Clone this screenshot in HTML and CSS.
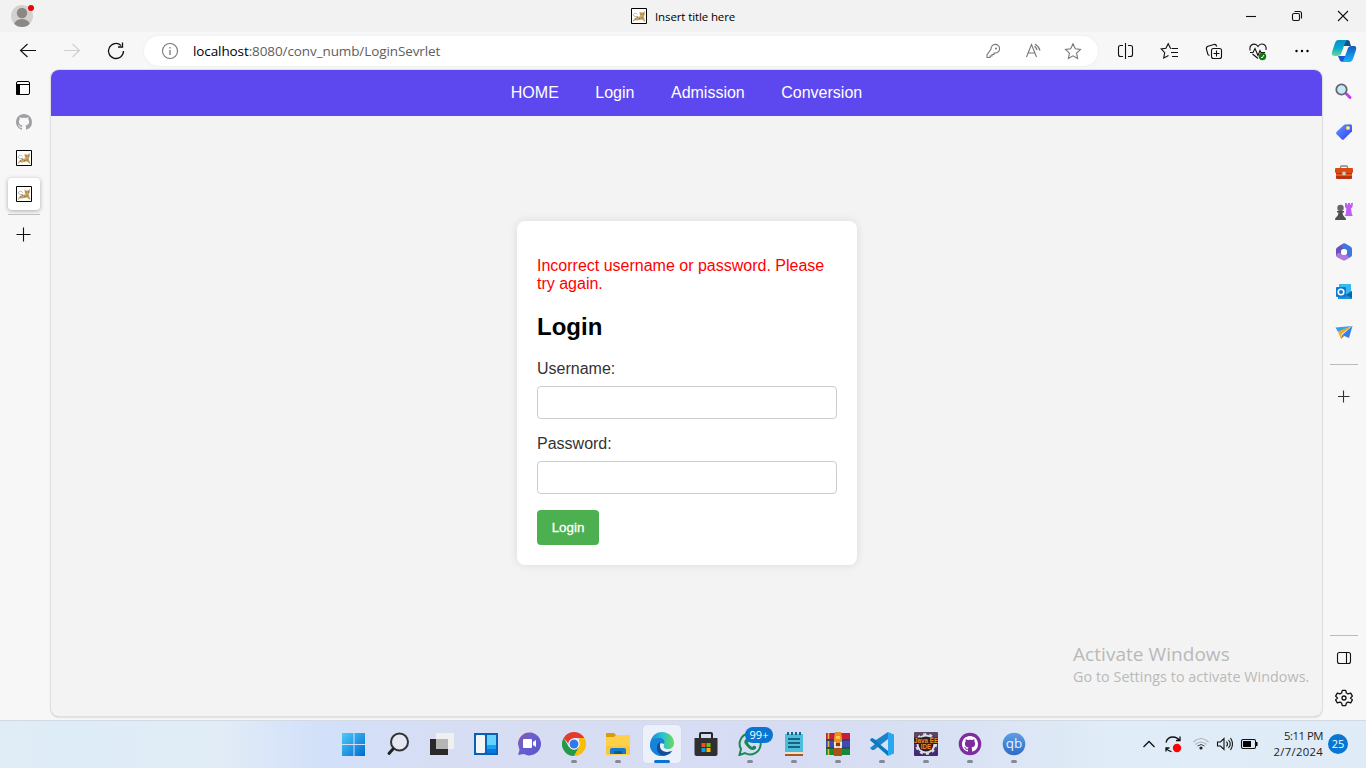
FILE: index.html
```
<!DOCTYPE html>
<html lang="en">
<head>
<meta charset="utf-8">
<title>Insert title here</title>
<link rel="stylesheet" href="styles.css">
</head>
<body>
<svg class="defs" width="0" height="0" aria-hidden="true">
  <symbol id="cat" viewBox="0 0 16 16">
    <path fill="#fff" stroke="#000" d="M.5.5h15v15H.5z"/>
    <path fill="none" stroke="#999" stroke-width=".7" d="M6 8.500C3 9 2 7.500 2.500 6.200 3.200 5 5.500 5 6.500 6.500"/>
    <path fill="#c8a260" d="M8.500 3.500l1.500 1h2l2-1.500-.3 3.500-.9 2 .7 2.500 1 2.500h-1.300l-2.200-2-2.500.2-2 .8-2.500-.3-1.500 1.300H1.500l2-3 2.500-1.500 3.500-.7-.8-2z"/>
    <path fill="#7a6034" d="M9.700 5.500h.9v.9h-.9zM12 5.500h.9v.9H12zM6 8.500h1v1H6zM8 10.300h1.300v.9H8zM10.500 9.500h1.200v1h-1.200zM4 10.500h1v.8H4z"/>
  </symbol>
  <symbol id="octocat" viewBox="0 0 16 16">
    <path d="M8 0C3.580 0 0 3.580 0 8c0 3.540 2.290 6.530 5.470 7.590.4.070.55-.17.55-.38 0-.19-.01-.82-.01-1.490-2.010.37-2.530-.49-2.690-.94-.09-.23-.48-.94-.82-1.130-.28-.15-.68-.52-.01-.53.63-.01 1.080.58 1.230.82.72 1.210 1.870.87 2.330.66.070-.52.28-.87.510-1.070-1.780-.2-3.640-.89-3.640-3.950 0-.87.310-1.590.82-2.150-.08-.2-.36-1.020.08-2.120 0 0 .67-.21 2.200.82.64-.18 1.320-.27 2-.27s1.360.09 2 .27c1.530-1.040 2.200-.82 2.200-.82.44 1.100.16 1.920.08 2.120.51.56.82 1.270.82 2.150 0 3.070-1.870 3.750-3.650 3.950.29.25.54.73.54 1.480 0 1.070-.01 1.930-.01 2.200 0 .21.15.46.55.38A8.010 8.010 0 0 0 16 8c0-4.420-3.580-8-8-8z"/>
  </symbol>
</svg>

<div class="desktop">
  <header class="titlebar">
    <div class="profile">
      <svg width="24" height="24" viewBox="0 0 24 24"><defs><clipPath id="pc"><circle cx="11" cy="13" r="11"/></clipPath></defs><g clip-path="url(#pc)"><path fill="#d3d1ce" d="M0 0h24v24H0z"/><circle cx="11" cy="10" r="5.200" fill="#8b8784"/><ellipse cx="11" cy="22" rx="8" ry="6" fill="#8b8784"/></g></svg>
      <i class="alert"></i>
    </div>
    <div class="window-title"><svg width="16" height="16"><use href="#cat"/></svg><span>Insert title here</span></div>
    <div class="window-buttons">
      <svg width="46" height="32"><path class="ln" d="M18 16.500h10"/></svg>
      <svg width="46" height="32"><rect class="ln" x="18.500" y="13.500" width="7" height="7" rx="1.500"/><path class="ln" d="M20.500 11.500h5a2 2 0 0 1 2 2v5"/></svg>
      <svg width="46" height="32"><path class="ln" d="M18 11l10 10M28 11L18 21"/></svg>
    </div>
  </header>

  <div class="toolbar">
    <svg width="44" height="38" viewBox="0 0 44 38"><path class="ln" d="M30 18.500H14.500M21.500 12l-7 6.500 7 6.500"/></svg>
    <svg width="44" height="38" viewBox="0 0 44 38"><path class="ln faint" d="M14 18.500h15.500M22.500 12l7 6.500-7 6.500"/></svg>
    <svg width="44" height="38" viewBox="0 0 44 38"><path class="ln big" d="M29.500 19a7.500 7.500 0 1 1-2.500-5.600M28.500 10.500v4.500h-4.500"/></svg>
    <div class="address">
      <svg class="info" width="18" height="18" viewBox="0 0 18 18"><circle class="ln gray" cx="9" cy="9" r="7.500"/><path class="gray" d="M9 8v5M9 5v1.500" stroke-width="1.300"/></svg>
      <span class="url">localhost<span>:8080/conv_numb/LoginSevrlet</span></span>
      <div class="address-tools">
        <svg width="40" height="30" viewBox="0 0 40 30"><path class="ln gray" d="M18 14a4.300 4.300 0 1 1 4 4h-1v1.500h-2V21h-2v1.500h-3V20z" transform="translate(0 -1)"/><circle cx="23" cy="12.500" r="1" fill="#777"/></svg>
        <svg width="40" height="30" viewBox="0 0 40 30"><path class="ln gray" d="M13.500 21l5-12.500 5 12.500M15 17h7M21.500 10q2 2 2.500 4M22 8q4 2.500 5 6.500"/></svg>
        <svg width="40" height="30" viewBox="0 0 40 30"><path class="ln gray" d="M20 7.800l2.300 4.900 5.200.7-3.900 3.700 1 5.300-4.600-2.600-4.600 2.600 1-5.300-3.900-3.700 5.200-.7z"/></svg>
      </div>
    </div>
    <div class="toolbar-actions">
      <svg width="44" height="38" viewBox="0 0 44 38"><path class="ln" d="M19 13.500h-2.500a2 2 0 0 0-2 2v7a2 2 0 0 0 2 2H19M24 13.500h2.500a2 2 0 0 1 2 2v7a2 2 0 0 1-2 2H24M21.500 11v16"/></svg>
      <svg width="44" height="38" viewBox="0 0 44 38"><path class="ln" d="M23.500 16.500l-1-.3-2.300-4.500-2.300 4.600-4.700.7 3.500 3.600-1 5.400 4.800-2.500M24 16.500h6M23 20.500h7M24 24.500h6"/></svg>
      <svg width="44" height="38" viewBox="0 0 44 38"><rect class="ln" x="19.500" y="16.500" width="10" height="10" rx="2"/><path class="ln" d="M24.500 18.500v6M21.500 21.500h6M17.500 23.500l-1.500-.8-1.500-5.200q-.7-2.500 1.500-3.300l6-1.700q2-.5 2.800 2"/></svg>
      <svg width="44" height="38" viewBox="0 0 44 38"><path class="ln" d="M14 18.500c-1-7 5.500-8 8-4 2.500-4 9-3 8 3.500M16.500 22l5.500 4.500M14 20.500h3l2-4 3 7 2-5 1 2h4"/><circle cx="26.500" cy="24.500" r="3.700" fill="#107c10"/><path stroke="#fff" d="M25 25l1 1 2-3" fill="none"/></svg>
      <svg width="44" height="38" viewBox="0 0 44 38"><circle cx="16.500" cy="19" r="1.200"/><circle cx="22" cy="19" r="1.200"/><circle cx="27.500" cy="19" r="1.200"/></svg>
    </div>
    <svg width="40" height="38" viewBox="0 0 40 38">
      <defs><linearGradient id="cp1" x1="0" y1="0" x2="0" y2="1"><stop stop-color="#0691c5"/><stop offset=".5" stop-color="#08a9d0"/><stop offset="1" stop-color="#69db8b"/></linearGradient><linearGradient id="cp2" x1="0" y1="0" x2="0" y2="1"><stop stop-color="#1558c2"/><stop offset="1" stop-color="#14b5fa"/></linearGradient></defs>
      <path fill="#0a5384" d="M19 8h4q3 0 3 3l1 3h-7z"/><path fill="#1a55d3" d="M14 24h9l-2 6h-2q-3 0-3.700-3z"/>
      <path fill="url(#cp1)" d="M14 8h10q-2 0-3 3l-4 11q-1 2-3 2h-3q-4 0-3-4l3-9q1-3 3-3z"/>
      <path fill="url(#cp2)" d="M26 30H17q2 0 3-3l4-11q1-2 3-2h3q3 0 2 4l-3 9q-1 3-3 3z"/>
    </svg>
  </div>

  <div class="workspace">
    <aside class="tabs">
      <svg width="16" height="16" class="tab-menu" viewBox="0 0 16 16"><rect x="1.500" y="1.500" width="13" height="13" rx="1.500" fill="#fff" stroke="#000" stroke-width="1"/><path d="M1 4h4v11H2q-1 0-1-1z"/><path stroke="#000" d="M2 4.500h12"/></svg>
      <svg width="16" height="16" class="tab-git" fill="#a0a0a4"><use href="#octocat"/></svg>
      <svg width="16" height="16" class="tab-cat"><use href="#cat"/></svg>
      <div class="tab-active"><svg width="16" height="16"><use href="#cat"/></svg></div>
      <hr class="tab-rule">
      <svg width="16" height="16" class="tab-new"><path class="ln" d="M.5 8.500h14M7.500 1.500v14"/></svg>
    </aside>

    <main class="page">
      <nav class="nav"><a>HOME</a><a>Login</a><a>Admission</a><a>Conversion</a></nav>
      <section class="content">
        <form class="card">
          <p class="error">Incorrect username or password. Please try again.</p>
          <h2>Login</h2>
          <label for="u">Username:</label>
          <input id="u" type="text">
          <label for="p">Password:</label>
          <input id="p" type="password">
          <button type="button">Login</button>
        </form>
      </section>
      <div class="watermark"><div class="wm-title">Activate Windows</div><div class="wm-sub">Go to Settings to activate Windows.</div></div>
    </main>

    <aside class="sidebar">
      <svg width="40" height="40" viewBox="0 0 40 40"><path stroke="#c23df0" stroke-width="3" stroke-linecap="round" d="M22.500 22l3.500 3.500"/><circle cx="17.500" cy="17.500" r="5.200" fill="#c5e8fb" stroke="#666" stroke-width="1.800"/></svg>
      <svg width="40" height="40" viewBox="0 0 40 40"><defs><linearGradient id="tg" x1="0" y1="0" x2="1" y2="1"><stop stop-color="#5ba0ff"/><stop offset="1" stop-color="#363af0"/></linearGradient></defs><path fill="url(#tg)" d="M20.500 12.500l6-.3q1.500 0 1.500 1.500v5.500l-8 8q-1.200 1-2.400 0l-5-5q-1-1.200 0-2.400z"/><circle cx="24" cy="16" r="1.500" fill="#fff" stroke="#ffc83d" stroke-width="1.200"/></svg>
      <svg width="40" height="40" viewBox="0 0 40 40"><path fill="none" stroke="#888" stroke-width="1.300" d="M16.500 17v-2q0-1 1-1h5q1 0 1 1v2"/><rect x="11" y="16" width="18" height="5" rx="1" fill="#d84a16"/><path fill="#b8330f" d="M12 21h16v5q0 1-1 1H13q-1 0-1-1z"/><path fill="#e45a20" d="M12 22h16v2H12z"/><circle cx="20" cy="21.500" r="1.900" fill="#c9c9c9"/></svg>
      <svg width="40" height="40" viewBox="0 0 40 40"><path fill="#c25af5" d="M21 11h1.800v1.500H24V11h2v1.500h1.200V11H29l-.6 4-1.400 1.500.8 5.500 1 2h-8l1-2 .6-5.500L21 15z"/><circle cx="16.500" cy="16" r="3.200" fill="#666"/><path fill="#505050" d="M13 19h7v1.500h-1.500q0 3 2 4.500 1.500.5 1.500 3H11q0-2.500 1.500-3 2-1.500 2-4.500H13z"/></svg>
      <svg width="40" height="40" viewBox="0 0 40 40"><g fill="none" stroke-width="5" stroke-linecap="round" stroke-linejoin="round"><path stroke="#6a52bd" d="M14.500 22.500v-5l4.500-3"/><path stroke="#b07adb" d="M15 23.500l5 2.500 5-2.800"/><path stroke="#3d78dd" d="M20.500 14l5 3v5.500"/></g><circle cx="20" cy="20" r="3" fill="#fff"/></svg>
      <svg width="40" height="40" viewBox="0 0 40 40"><path fill="#35b9f1" d="M15 12h12v14H15z"/><path fill="#0f6cbd" d="M15 16h6v6h-6z"/><path fill="#1493df" d="M14 19l7 4 7-4v8H14z"/><path fill="#0a63ad" d="M22 23l6-4v7z"/><rect x="12" y="15" width="10" height="10" rx="1" fill="#0f78d4"/><circle cx="17" cy="20" r="2.800" fill="none" stroke="#fff" stroke-width="1.600"/></svg>
      <svg width="40" height="40" viewBox="0 0 40 40"><path fill="#31a4ec" d="M11.500 15.500L28.500 14 14 20z"/><path fill="#f5a623" d="M14 19.500L28.500 14l-11 8-.5 5z"/><path fill="#327fe9" d="M28.500 14L25 26l-7-3z"/><path fill="#876a3c" d="M17 27l1-4 2 1z"/></svg>
      <hr>
      <svg class="add" width="40" height="40" viewBox="0 0 40 40"><path class="ln dim" d="M14 20.500h11.500M19.500 14.500v12"/></svg>
      <hr class="lower">
      <svg width="40" height="40" viewBox="0 0 40 40"><rect class="ln" x="13.500" y="14.500" width="13" height="11" rx="2"/><path class="ln" d="M22.500 14.500v11"/></svg>
      <svg width="40" height="40" viewBox="0 0 40 40"><path class="ln big" stroke-linejoin="round" d="M18.300 12.300h3.400l.7 2.700 1.600.9 2.700-.8 1.700 3-1.900 1.900 1.900 1.900-1.700 3-2.700-.8-1.600.9-.7 2.700h-3.400l-.7-2.700-1.600-.9-2.700.8-1.700-3 1.900-1.900-1.900-1.900 1.700-3 2.700.8 1.600-.9z"/><circle class="ln big" cx="20" cy="20" r="2"/></svg>
    </aside>
  </div>

  <footer class="taskbar">
    <div class="apps">
      <div class="app"><svg width="24" height="24" viewBox="0 0 24 24"><defs><linearGradient id="win" x1="0" y1="0" x2="1" y2="1"><stop stop-color="#4ccafa"/><stop offset="1" stop-color="#006cce"/></linearGradient></defs><path fill="url(#win)" d="M0 1h11.500v11H0zM12.500 1H23v11H12.500zM0 13h11.500v11H0zM12.500 13H23v11H12.500z"/></svg></div>
      <div class="app"><svg width="24" height="24" viewBox="0 0 24 24"><circle cx="13.500" cy="10" r="8.500" fill="#e5e8f3" stroke="#333" stroke-width="2"/><path stroke="#222" stroke-width="3" stroke-linecap="round" d="M7 17l-4 4.500"/></svg></div>
      <div class="app"><svg width="24" height="24" viewBox="0 0 24 24"><path fill="#292929" d="M0 7h18v16H0z"/><path fill="#f0f0f0" d="M6 1h18v16H6z"/><path fill="#b5b5b5" d="M6 7h12v10H6z"/></svg></div>
      <div class="app"><svg width="24" height="24" viewBox="0 0 24 24"><path fill="#0861b6" d="M0 1h24v22H0z"/><rect x="2" y="3" width="9" height="18" rx="1" fill="#f5f5f5"/><path fill="#64d3fd" d="M13 3h9v10h-9z"/><path fill="#16a3f5" d="M13 13h9v8h-9z"/><path fill="#0879da" d="M13 17h9v4h-9z"/></svg></div>
      <div class="app"><svg width="24" height="24" viewBox="0 0 24 24"><defs><linearGradient id="chat" x1="0" y1="0" x2="1" y2="1"><stop stop-color="#8b5a9a"/><stop offset=".4" stop-color="#6b5fd0"/><stop offset="1" stop-color="#5655c9"/></linearGradient></defs><path fill="url(#chat)" d="M0 12a11.500 11.500 0 1 1 6 10l-6 1 1.500-5z"/><rect x="5" y="7" width="9" height="9" rx="1" fill="#fff"/><path fill="#fff" d="M15 10l3-2v7l-3-2z"/></svg></div>
      <div class="app running"><svg width="24" height="24" viewBox="0 0 24 24"><path fill="#e33b2e" d="M1.600 6a12 12 0 0 1 20.800 0H12v12z"/><path fill="#fbbc05" d="M22.400 6A12 12 0 0 1 12 24l5-9 0-9z"/><path fill="#269846" d="M1.600 6A12 12 0 0 0 12 24l5-9-10 0z"/><circle cx="12" cy="12" r="5.700" fill="#fff"/><circle cx="12" cy="12" r="4.500" fill="#3279ed"/></svg></div>
      <div class="app running"><svg width="24" height="24" viewBox="0 0 24 24"><path fill="#d99a0b" d="M0 2q0-1 1-1h7l2 2v4H0z"/><path fill="#ffd14b" d="M0 5h8l2-2h14v20H0z"/><path fill="#f8c843" d="M0 14h24v8H0z"/><path fill="#157acb" d="M4 22v-4q0-2 2-2h12q2 0 2 2v4z"/><path fill="#0a5ca2" d="M8 19h8v3H8z"/></svg></div>
      <div class="app running current"><svg width="24" height="24" viewBox="0 0 24 24"><defs><linearGradient id="eg"><stop stop-color="#1687d8"/><stop offset=".5" stop-color="#29bfd5"/><stop offset="1" stop-color="#68dc55"/></linearGradient></defs><path fill="url(#eg)" d="M0 12C1 4 6 0 12 0c7 0 12 5 12 11 0 4-3 6-6 6-4 0-5-2-4-4 1-3-2-5-5-5-5 0-8 2-9 4z"/><path fill="#1682d8" d="M0 12C1 8 5 6 9 6c5 0 6 3 5 6-4-2-6 1-5 5q1 4 7 7C8 26-1 20 0 12z"/><path fill="#124d98" d="M10 10c-5 3-4 14 5 13.500 4-.3 6-3 7.500-5-6 3-12 1-12.500-4z"/></svg></div>
      <div class="app"><svg width="24" height="24" viewBox="0 0 24 24"><path fill="none" stroke="#262626" stroke-width="2" d="M6 8V2q0-1 1-1h10q1 0 1 1v6"/><path fill="#303030" d="M.5 6h23v16q0 2-2 2h-19q-2 0-2-2z"/><path fill="#f25022" d="M7.500 11h4v4h-4z"/><path fill="#7fba00" d="M12.500 11h4v4h-4z"/><path fill="#00a4ef" d="M7.500 16h4v4h-4z"/><path fill="#ffb900" d="M12.500 16h4v4h-4z"/></svg></div>
      <div class="app running"><svg width="24" height="24" viewBox="0 0 24 24"><path fill="none" stroke="#188953" stroke-width="2" d="M1.500 23l1.500-6a10.500 10.500 0 1 1 4 4z"/><path fill="#188953" d="M8 7q2-1 3 2l-1 2q1 2 4 4l2-1.500q3 1 2 3-4 4-9-2-5-5-1-7.500z"/></svg><span class="count">99+</span></div>
      <div class="app running"><svg width="24" height="24" viewBox="0 0 24 24"><path fill="#4cbedb" d="M3 2h18v19H3z"/><path stroke="#176480" stroke-width="2" d="M6 0v3M10 0v3M14 0v3M18 0v3M6 7h12M6 11h12M6 15h12"/><path fill="#f3dfc6" d="M3 20h18v2H3z"/><path fill="#a9571d" d="M3 22h18v2H3z"/></svg></div>
      <div class="app running"><svg width="24" height="24" viewBox="0 0 24 24"><path fill="#c71e3d" d="M0 1h24v7H0z"/><path fill="#4149b3" d="M0 8h24v8H0z"/><path fill="#16893d" d="M0 16h24v7H0z"/><path stroke="#333" d="M0 8h24M0 16h24"/><path stroke="#e4bd35" stroke-width="1.500" d="M2.500 1v6M2.500 9v6M2.500 17v6"/><path fill="#e89421" d="M9 0h6l1 6v7H8V6z"/><path fill="#ffc44d" d="M10 4h4v3h-4z"/><path fill="#a65516" d="M8 16h8v8H8z"/><path fill="#7d3d12" d="M9 11h6v4H9z"/><path fill="none" stroke="#fff" stroke-width="1.600" d="M9 10v6M15 10v6M9 15h6"/></svg></div>
      <div class="app running"><svg width="24" height="24" viewBox="0 0 24 24"><path fill="#1b83cb" d="M0 8l2-2 4 2L18 0v7L4 18H2l-2-2 5-4z"/><path fill="#0879bd" d="M2 6L18 19v5L0 8z"/><path fill="#28a7f2" d="M18 0l6 2.500v19L18 24z"/></svg></div>
      <div class="app running"><svg class="javaee" width="24" height="24" viewBox="0 0 24 24"><defs><linearGradient id="ee" x1="0" y1="0" x2="0" y2="1"><stop stop-color="#5d4a62"/><stop offset="1" stop-color="#43247a"/></linearGradient></defs><rect width="24" height="24" rx="1" fill="url(#ee)"/><circle cx="12" cy="12" r="8.500" fill="#2b2230" stroke="#ddd" stroke-width="2"/><circle cx="12" cy="12" r="10" fill="none" stroke="#ddd" stroke-width="2" stroke-dasharray="3 3.280"/><path fill="#2b2022" d="M0 5.500h24V12H0zM6 12h12v5.500H6z"/><g fill="#ef8a24" font-family="Liberation Sans" font-size="6.300" font-weight="bold" text-anchor="middle"><text x="12" y="11">Java EE</text><text x="12" y="17.200">IDE</text></g></svg></div>
      <div class="app running"><svg width="24" height="24" viewBox="0 0 24 24"><circle cx="12" cy="12" r="11.300" fill="#7d2da0"/><svg x="4" y="4" width="16" height="16" fill="#fff"><use href="#octocat"/></svg></svg></div>
      <div class="app running"><svg width="24" height="24" viewBox="0 0 24 24"><defs><linearGradient id="qb" x1="0" y1="0" x2="0" y2="1"><stop stop-color="#5e9fe4"/><stop offset="1" stop-color="#2c6ac6"/></linearGradient></defs><circle cx="12" cy="12" r="11.300" fill="url(#qb)"/><text x="12" y="16" fill="#e8f3ff" font-family="Open Sans" font-size="13.500" text-anchor="middle">qb</text></svg></div>
    </div>
    <div class="tray">
      <svg class="chevron" width="24" height="24"><path class="ln big" d="M6.500 15l5.500-5.500 5.500 5.500"/></svg>
      <svg class="sync" width="24" height="24"><path class="ln big" d="M5 10.500q1.500-5.500 7-5.500 4 0 6.500 3.500M19 4.500v4h-4M5 19.500V16h3.500M5.500 16.500q2 3 5 3.200"/><circle cx="16" cy="16" r="4.200" fill="#f00"/></svg>
      <svg class="wifi" width="24" height="24"><path fill="none" stroke="#aab1b8" stroke-width="1.100" d="M4.500 10Q12 3 19.500 10M6.500 12.500q5.500-5 11 0"/><path fill="none" stroke="#444" d="M8.500 14q3.500-3 7 0"/><circle cx="12" cy="16" r="1.600" fill="#222"/></svg>
      <svg class="sound" width="24" height="24"><path class="ln" d="M4.500 10h3l3.500-3.500v11L7.500 14h-3zM13.500 9.500q2 2.500 0 5M15.500 8q3.500 4 0 8M17.500 6q4 6 0 12"/></svg>
      <svg class="battery" width="24" height="24"><rect x="4.500" y="7.500" width="14" height="9" rx="1.500" class="ln"/><path d="M6 9h8v6H6zM19 10h1.500v4H19z"/></svg>
      <div class="clock"><span class="time">5:11 PM</span><span class="date">2/7/2024</span></div>
      <span class="notifications">25</span>
    </div>
  </footer>
</div>
</body>
</html>
```
FILE: styles.css
```
* { box-sizing: border-box; }
body { margin: 0; font-family: "Open Sans", "Noto Sans", sans-serif; color: #000; overflow: hidden; }
svg { display: block; flex: none; }
.defs { position: absolute; }
.desktop { width: 1366px; height: 768px; display: flex; flex-direction: column; background: #f7f7f7; }

.ln { fill: none; stroke: #111; stroke-width: 1.1; }
.big { stroke-width: 1.3; }
.faint { stroke: #cfcfcf; }
.dim { stroke: #333; }
.gray { stroke: #777; }

.titlebar { height: 32px; background: #f2f2f2; display: grid; grid-template-columns: 1fr auto 1fr; }
.profile { position: relative; padding: 3px 0 0 11px; }
.alert { position: absolute; left: 28px; top: 5px; width: 6px; height: 6px; border-radius: 50%; background: #e20a0a; }
.window-title { display: flex; align-items: center; gap: 8px; }
.window-title span { width: 80px; white-space: nowrap; font-size: 11.5px; letter-spacing: -.12px; }
.window-buttons { display: flex; justify-content: flex-end; }

.toolbar { height: 38px; display: flex; padding-left: 6px; }
.address { margin: 4px 6px 0; width: 954px; height: 30px; border-radius: 15px; background: #fff; box-shadow: 0 0 3px #e8e8e8; display: flex; align-items: center; padding-left: 17px; padding-right: 5px; }
.url { margin-left: 14px; font-size: 13.5px; letter-spacing: -.1px; white-space: nowrap; }
.url span { color: #5e5e5e; }
.address-tools { display: flex; margin-left: auto; }
.toolbar-actions { display: flex; }

.workspace { height: 650px; display: flex; }
.tabs { width: 51px; padding-top: 10px; display: flex; flex-direction: column; padding-left: 8px; }
.tabs > svg { margin-left: 8px; }
.tab-menu { transform: translateX(-1px); }
.tab-git { margin-top: 18px; }
.tab-cat { margin-top: 20px; }
.tab-active { margin-top: 12px; width: 32px; height: 32px; display: grid; place-items: center; background: #fff; border-radius: 4px; box-shadow: 0 1px 4px #aaa; }
.tab-rule { width: 32px; height: 1px; border: 0; margin: 4px 0 0; background: #c2c2c2; }
.tab-new { margin-top: 11px; }

.page { position: relative; width: 1271px; height: 646px; background: #f3f3f3; border-radius: 8px; overflow: hidden; box-shadow: 0 0 0 1px #e0e0e0, 0 1px 2px #aaa; display: flex; flex-direction: column; font-family: "Liberation Sans", Arial, sans-serif; }
.nav { height: 46px; background: #5d48ef; color: #fff; display: flex; justify-content: center; align-items: center; gap: 36.5px; font-size: 16px; }
.content { flex: 1; padding-top: 105px; padding-left: 466px; }
.card { width: 340px; height: 344px; padding: 20px; background: #fff; border-radius: 8px; box-shadow: 0 0 10px rgba(0,0,0,.1); }
.error { margin: 16px 0 0; line-height: 18px; color: #f00; }
h2 { margin: 20px 0; font-size: 24px; line-height: 27px; }
label { display: block; margin-bottom: 8px; line-height: 18px; color: #333; }
input { display: block; width: 300px; height: 33px; margin: 0 0 16px; border: 1px solid #ccc; border-radius: 4px; background: #fff; }
button { display: block; width: 62px; height: 35px; padding: 0; border: 0; border-radius: 4px; background: #4caf50; color: #fff; font: 13.333px "Liberation Sans", Arial, sans-serif; -webkit-text-stroke: .3px #fff; }
.watermark { position: absolute; left: 1022px; top: 571px; color: #b9b9b9; font-family: "Open Sans", sans-serif; white-space: nowrap; }
.wm-title { font-size: 19px; line-height: 26px; letter-spacing: .05px; }
.wm-sub { font-size: 14.3px; line-height: 20px; letter-spacing: .06px; }

.sidebar { width: 44px; padding: 2px 2px 0; display: flex; flex-direction: column; }
.sidebar hr { width: 28px; height: 1px; margin: 12px 0 0 6px; border: 0; background: #bcbcbc; }
.sidebar .add { margin-top: 11px; }
.sidebar .lower { margin: auto 0 2px 6px; }
.sidebar > svg:last-child { margin-bottom: 2px; }

.taskbar { height: 48px; display: flex; border-top: 1px solid #d3dae4; background: linear-gradient(90deg, #e1ecf5 0, #deecf8 60px, #e1ecf6 220px, #d2e0fa 320px, #d6def4 430px, #d6dcf3 800px, #d9e2f4 960px, #e0ecf7 1110px, #dfebf7 1366px); }
.apps { display: flex; padding-left: 332px; }
.app { position: relative; width: 44px; height: 46px; display: grid; place-items: center; }
.app > svg { position: relative; }
.javaee { overflow: visible; }
.current::before { content: ""; position: absolute; left: 3px; top: 4px; width: 38px; height: 38px; border-radius: 4px; background: #ebf0fa; box-shadow: 0 0 1px #b8c1d4; }
.running::after { content: ""; position: absolute; left: 19px; top: 39px; width: 6px; height: 3px; border-radius: 2px; background: #858991; }
.current::after { left: 14px; width: 16px; background: #0875d1; }
.count { position: absolute; left: 17px; top: 6px; width: 28px; height: 16px; border-radius: 8px; background: #0875d1; color: #fff; font-size: 11px; line-height: 16px; text-align: center; }
.tray { flex: 1; height: 46px; display: flex; align-items: center; padding-left: 101px; }
.wifi { margin-left: 4px; }
.clock { margin-left: 2px; width: 60px; display: flex; flex-direction: column; align-items: flex-end; font-size: 11.3px; line-height: 16px; color: #222; white-space: nowrap; }
.time { letter-spacing: -.45px; }
.date { letter-spacing: .3px; }
.notifications { margin-left: 5px; width: 20px; height: 20px; flex: none; border-radius: 50%; background: #0877d3; color: #fff; font-size: 11px; line-height: 20px; text-align: center; }
```
